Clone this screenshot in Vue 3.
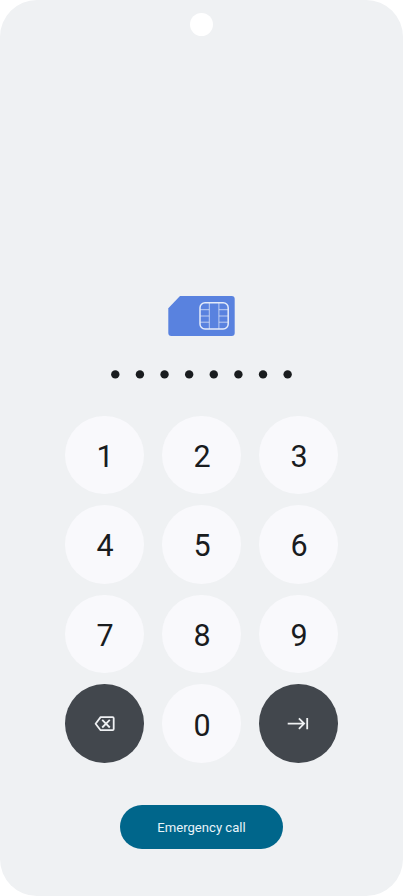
<script setup>
const pinLength = 8
const keys = ['1', '2', '3', '4', '5', '6', '7', '8', '9', 'delete', '0', 'enter']
</script>

<template>
  <main class="screen">
    <div class="camera"></div>
    <svg class="sim" viewBox="0 0 67 40" aria-hidden="true">
      <path d="M12 0H63.7Q66.7 0 66.7 3V37Q66.7 40 63.7 40H3.3Q.3 40 .3 37V12.2Z" fill="#5982df" />
      <g fill="none" stroke="#e5ecfa">
        <rect x="32" y="6.8" width="28.2" height="26.2" rx="5" stroke-width="1.5" />
        <path d="M41.3 7V33M50.9 7V33M32 13.7H41.3M32 20H41.3M32 26.2H41.3M50.9 13.7H60.2M50.9 20H60.2M50.9 26.2H60.2" stroke-width=".9" opacity=".8" />
      </g>
    </svg>
    <svg class="pin" viewBox="0 0 182 10" aria-hidden="true">
      <circle v-for="n in pinLength" :key="n" :cx="4.3 + (n - 1) * 24.62" cy="5.4" r="4.2" />
    </svg>
    <div class="keypad">
      <button v-for="key in keys" :key="key" class="key" :class="{ action: key.length > 1 }" :aria-label="key">
        <svg v-if="key === 'delete'" class="icon" viewBox="0 0 24 24">
          <path d="M7.6 5.1H19.6Q20.7 5.1 20.7 6.2V17.1Q20.7 18.2 19.6 18.2H7.6L2.6 11.7Z" stroke-linejoin="round" />
          <path d="M9.2 7.8L16.8 15.5M16.8 7.8L9.2 15.5" />
        </svg>
        <svg v-else-if="key === 'enter'" class="icon" viewBox="0 0 24 24">
          <path d="M1.7 11.6H17.7M12.9 6.4L18.1 11.6L12.9 16.8M21.2 5.9V17.3" />
        </svg>
        <span v-else class="digit">{{ key }}</span>
      </button>
    </div>
    <button class="emergency"><span>Emergency call</span></button>
  </main>
</template>

<style>
body {
  margin: 0;
  background: #fff;
}
</style>

<style scoped>
.screen {
  box-sizing: border-box;
  width: 403px;
  height: 896px;
  padding-top: 13px;
  display: flex;
  flex-direction: column;
  align-items: center;
  border-radius: 37px;
  background: #eff1f3;
  font-family: Roboto, sans-serif;
  overflow: hidden;
}
.camera {
  flex: none;
  width: 23px;
  height: 23px;
  border-radius: 50%;
  background: #fff;
}
.sim {
  flex: none;
  width: 67px;
  height: 40px;
  margin-top: 260px;
}
.pin {
  flex: none;
  width: 182px;
  height: 10px;
  margin-top: 33px;
  fill: #191c1e;
}
.keypad {
  display: grid;
  grid-template-columns: repeat(3, 78.6px);
  grid-auto-rows: 78.6px;
  gap: 11px 18.4px;
  margin-top: 36.5px;
}
button {
  display: flex;
  align-items: center;
  justify-content: center;
  border: 0;
  padding: 0;
  font-family: inherit;
}
.key {
  border-radius: 50%;
  background: #f9f9fc;
  color: #191c1e;
  font-size: 30.5px;
}
.digit {
  padding: 4px 0 0 1px;
  line-height: 36px;
}
.action {
  background: #42474d;
}
.icon {
  width: 24px;
  height: 24px;
  fill: none;
  stroke: #eff1f3;
  stroke-width: 1.8;
}
.emergency {
  width: 163.6px;
  height: 44.8px;
  margin-top: 41.7px;
  border-radius: 22.4px;
  background: #00668b;
  color: #e8f4fa;
  font-size: 13.1px;
}
.emergency span {
  padding-top: 1px;
}
</style>
